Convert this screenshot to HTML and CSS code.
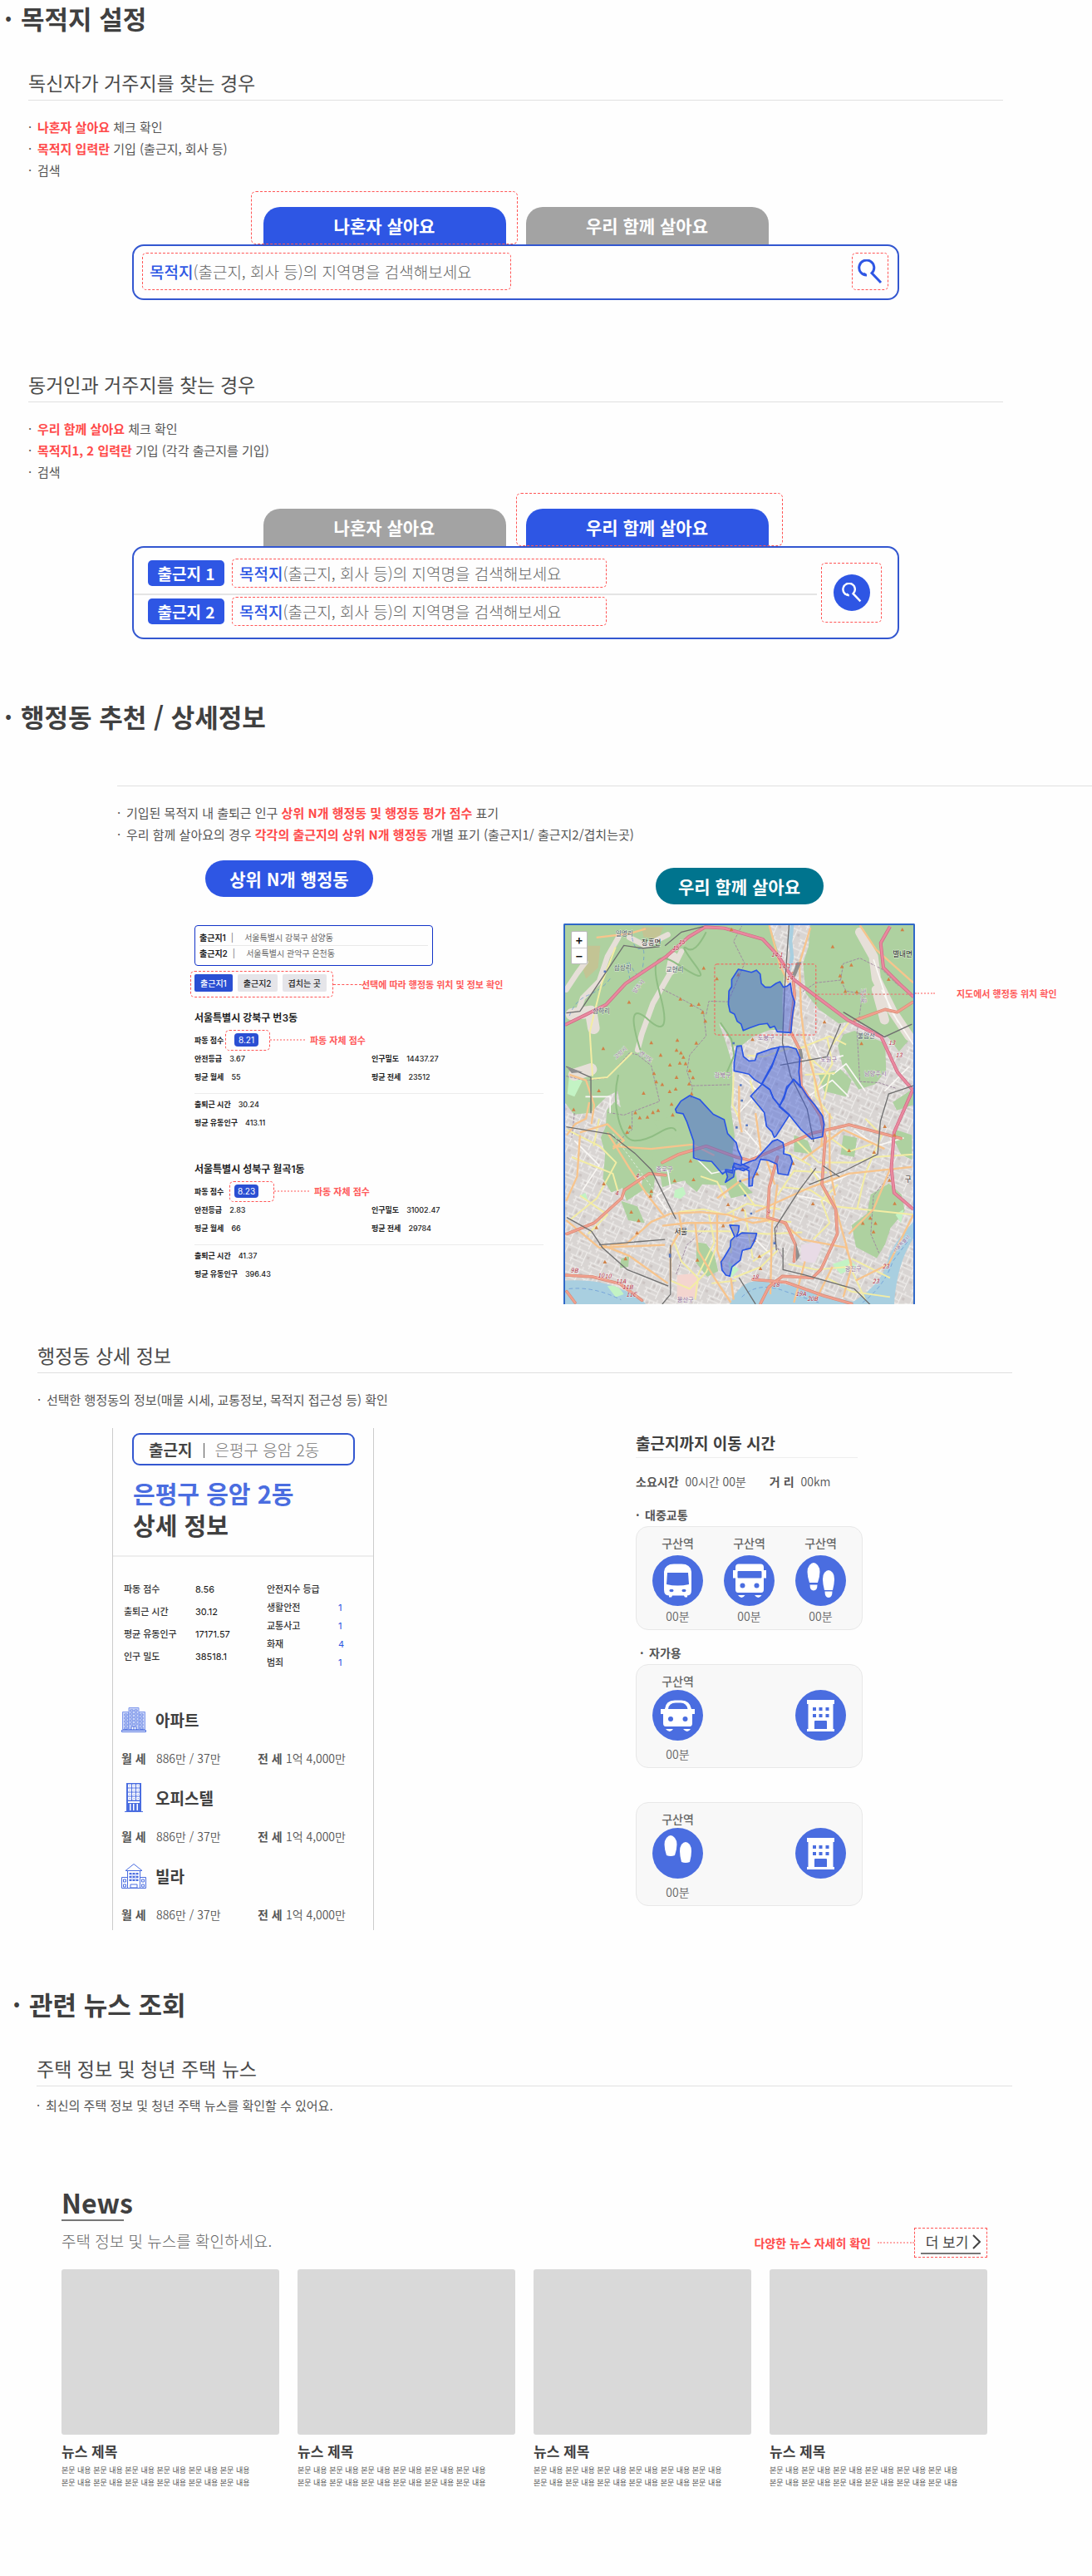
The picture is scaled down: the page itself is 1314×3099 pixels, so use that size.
FILE: index.html
```html
<!DOCTYPE html>
<html lang="ko">
<head>
<meta charset="utf-8">
<meta name="viewport" content="width=device-width, initial-scale=1">
<title>서비스 이용 안내</title>
<link rel="stylesheet" href="styles.css">
</head>
<body>
<svg class="sprite" aria-hidden="true">
  <symbol id="i-search" viewBox="0 0 30 30"><path d="M11 19A9 9 0 1 1 17 16.500L28 28M7 17l2.500 1.500" fill="none" stroke="currentColor" stroke-width="3"/></symbol>
  <symbol id="i-train" viewBox="0 0 61 61"><circle cx="30.500" cy="30.500" r="30.500" fill="#4a6de0"/><path d="M14 42V20q1-9.500 12-9.500h9q11 0 12 9.500v22q0 6.500-5 6.500v2h-3l-1-2H24l-1 2h-3v-2q-6 0-6-7z" fill="#fff"/><path d="M18 21h25l1 14q-13.500 3-27 0z" fill="#4a6de0"/><ellipse cx="23" cy="42.500" rx="2.600" ry="1.800" fill="#4a6de0"/><ellipse cx="38" cy="42.500" rx="2.600" ry="1.800" fill="#4a6de0"/></symbol>
  <symbol id="i-bus" viewBox="0 0 61 61"><circle cx="30.500" cy="30.500" r="30.500" fill="#4a6de0"/><path d="M18 10.500h26q4 0 4 4V18h3v9.500h-3V41q0 4-3 4H17q-3 0-3-4V27.500h-3V18h3v-3.500q0-4 4-4z" fill="#fff"/><rect x="16.500" y="19" width="29" height="8.500" rx="1" fill="#4a6de0"/><circle cx="22.500" cy="36.500" r="3" fill="#4a6de0"/><circle cx="39.500" cy="36.500" r="3" fill="#4a6de0"/><path d="M17 48h8.500q-4 6-8.500 0zM37 48h8.500q-4 6-8.500 0z" fill="#fff"/></symbol>
  <symbol id="i-walk" viewBox="0 0 61 61"><circle cx="30.500" cy="30.500" r="30.500" fill="#4a6de0"/><path d="M17 33q-5-15 0-21 5-6 10 0 5 6 0 21zM35 42q-4-16 0-21 5-6 10 0 4 5 0 21z" fill="#fff"/><path d="M17.500 35.500h9q0 7-4.500 7t-4.500-7zM35.500 43.500h9q0 7.500-4.500 7.500t-4.500-7.500z" fill="#fff"/></symbol>
  <symbol id="i-steps" viewBox="0 0 61 61"><circle cx="30.500" cy="30.500" r="30.500" fill="#4a6de0"/><path d="M17 33q-5-15 0-21 5-6 10 0 5 6 0 21-5 2-10 0zM35 41q-4-15 0-21 5-6 10 0 4 6 0 21-5 2-10 0z" fill="#fff"/></symbol>
  <symbol id="i-car" viewBox="0 0 61 61"><circle cx="30.500" cy="30.500" r="30.500" fill="#4a6de0"/><path d="M15 23q1-10.500 12-10.500h8q10 0 12 10.500h4v6h-3v11q0 4-3 4H16q-3 0-3-4V29h-3v-6z" fill="#fff"/><path d="M19 23q1-7.500 9-7.500h6q7 0 8.500 7.500z" fill="#4a6de0"/><circle cx="22" cy="35" r="3" fill="#4a6de0"/><circle cx="39.500" cy="35" r="3" fill="#4a6de0"/><path d="M16 47h9q-4 6-9 0zM37 47h9q-4 6-9 0z" fill="#fff"/></symbol>
  <symbol id="i-office" viewBox="0 0 61 61"><circle cx="30.500" cy="30.500" r="30.500" fill="#4a6de0"/><path d="M14 12h33v5h-1.500v30H47v3H14v-3h1.500V17H14z" fill="#fff"/><path d="M21 21h4v4h-4zM28.500 21h4v4h-4zM36.500 21h4v4h-4zM21 29h4v4h-4zM28.500 29h4v4h-4zM36.500 29h4v4h-4zM23 38q0-1 1-1h13q1 0 1 1v9H23z" fill="#4a6de0"/></symbol>
</svg>

<main>
<section class="guide guide-search">
  <h1>목적지 설정</h1>
  <article class="case">
    <h2>독신자가 거주지를 찾는 경우</h2>
    <ul class="notes">
      <li><em>나혼자 살아요</em> 체크 확인</li>
      <li><em>목적지 입력란</em> 기입 (출근지, 회사 등)</li>
      <li>검색</li>
    </ul>
    <form class="finder">
      <div class="tabs">
        <button type="button" class="tab is-active">나혼자 살아요</button>
        <button type="button" class="tab">우리 함께 살아요</button>
      </div>
      <div class="box box-single">
        <div class="field framed">
          <label for="place">목적지</label><input id="place" type="text" placeholder="(출근지, 회사 등)의 지역명을 검색해보세요">
        </div>
        <button type="button" class="go framed" aria-label="검색"><svg><use href="#i-search"/></svg></button>
      </div>
    </form>
  </article>
  <article class="case">
    <h2>동거인과 거주지를 찾는 경우</h2>
    <ul class="notes">
      <li><em>우리 함께 살아요</em> 체크 확인</li>
      <li><em>목적지1, 2 입력란</em> 기입 (각각 출근지를 기입)</li>
      <li>검색</li>
    </ul>
    <form class="finder">
      <div class="tabs">
        <button type="button" class="tab">나혼자 살아요</button>
        <button type="button" class="tab is-active">우리 함께 살아요</button>
      </div>
      <div class="box box-double">
        <div class="rows">
          <div class="row">
            <span class="chip">출근지 1</span>
            <div class="field framed">
              <label for="place1">목적지</label><input id="place1" type="text" placeholder="(출근지, 회사 등)의 지역명을 검색해보세요">
            </div>
          </div>
          <div class="row">
            <span class="chip">출근지 2</span>
            <div class="field framed">
              <label for="place2">목적지</label><input id="place2" type="text" placeholder="(출근지, 회사 등)의 지역명을 검색해보세요">
            </div>
          </div>
        </div>
        <button type="button" class="go go-round framed" aria-label="검색"><span><svg><use href="#i-search"/></svg></span></button>
      </div>
    </form>
  </article>
</section>

<section class="guide guide-area">
  <h1>행정동 추천 / 상세정보</h1>
  <div class="intro">
    <ul class="notes">
      <li>기입된 목적지 내 출퇴근 인구 <em>상위 N개 행정동 및 행정동 평가 점수</em> 표기</li>
      <li>우리 함께 살아요의 경우 <em>각각의 출근지의 상위 N개 행정동</em> 개별 표기 (출근지1/ 출근지2/겹치는곳)</li>
    </ul>
  </div>
  <div class="result">
    <div class="ranking">
      <p class="pill">상위 N개 행정동</p>
      <dl class="origins">
        <div><dt>출근지1</dt><dd>서울특별시 강북구 삼양동</dd></div>
        <div><dt>출근지2</dt><dd>서울특별시 관악구 은천동</dd></div>
      </dl>
      <div class="switch">
        <div class="switch-buttons framed">
          <button type="button" class="is-active">출근지1</button>
          <button type="button">출근지2</button>
          <button type="button">겹치는 곳</button>
        </div>
        <i class="leader leader-switch"></i>
        <strong class="remark">선택에 따라 행정동 위치 및 정보 확인</strong>
      </div>
      <article class="dong">
        <h3>서울특별시 강북구 번3동</h3>
        <div class="score">
          <span class="score-label">파동 점수</span><span class="score-frame framed"><b>8.21</b></span>
          <i class="leader leader-soft"></i><strong class="remark">파동 자체 점수</strong>
        </div>
        <dl class="stats">
          <div><dt>안전등급</dt><dd>3.67</dd></div><div><dt>인구밀도</dt><dd>14437.27</dd></div>
          <div><dt>평균 월세</dt><dd>55</dd></div><div><dt>평균 전세</dt><dd>23512</dd></div>
        </dl>
        <dl class="stats stats-sub">
          <div><dt>출퇴근 시간</dt><dd>30.24</dd></div>
          <div><dt>평균 유동인구</dt><dd>413.11</dd></div>
        </dl>
      </article>
      <article class="dong">
        <h3>서울특별시 성북구 월곡1동</h3>
        <div class="score">
          <span class="score-label">파동 점수</span><span class="score-frame score-frame-tight framed"><b>8.23</b></span>
          <i class="leader leader-soft"></i><strong class="remark">파동 자체 점수</strong>
        </div>
        <dl class="stats">
          <div><dt>안전등급</dt><dd>2.83</dd></div><div><dt>인구밀도</dt><dd>31002.47</dd></div>
          <div><dt>평균 월세</dt><dd>66</dd></div><div><dt>평균 전세</dt><dd>29784</dd></div>
        </dl>
        <dl class="stats stats-sub">
          <div><dt>출퇴근 시간</dt><dd>41.37</dd></div>
          <div><dt>평균 유동인구</dt><dd>396.43</dd></div>
        </dl>
      </article>
    </div>
    <div class="map-column">
      <p class="pill pill-teal">우리 함께 살아요</p>
      <div class="map">
        <svg viewBox="6 15 1269 1380" role="img" aria-label="행정동 지도">
          <defs>
            <pattern id="streets" width="74" height="66" patternUnits="userSpaceOnUse" patternTransform="rotate(24)">
              <rect width="74" height="66" fill="#d9d5d3"/>
              <path d="M0 12H74M0 40H50M20 0V40M52 12V66M8 40V66M36 12V40M0 54H52M62 0V12" stroke="#f3f1ef" stroke-width="3" fill="none"/>
              <path d="M26 20h8v12h-8zM58 24h10v10h-10zM14 46h12v5h-12z" fill="#cbc4c2"/>
            </pattern>
            <path id="peak" d="M0-7L7 6H-7z" fill="#d08146"/>
          </defs>
          <rect x="6" y="15" width="1269" height="1380" fill="url(#streets)"/>

          <!-- woodland and parks -->
          <g fill="#aed1a0">
            <path d="M6 15H752l28 90 24 90-6 90 2 110-50 2-60 24-50 40-24-10-26-50-24-30 22 60 26 84 2 80-6 90 14 100-8 60 20 120-130-6-20 28-40-34-16-40-60 24-50-20-70 22-40 36-36 14-30-50 8-90-16-60 18-40 4-60 28-30 22 20-10-60-40 20-60 60-60 6-30-40-62-20z"/>
            <path d="M900 15h375v400l-52 60-40-52-120-58-60 8-70-50-50-60-10-110 20-60z"/>
            <path d="M1060 400l112 44 4 100-40 50-60 20-60-90-16-70 20-40zM930 560l20 60 80 20 20-60-40-40z"/>
            <path d="M1120 996l66-40 46 40 12 60-52 62-20 60-30 50-76-40-16-80 56-42zM1210 760l60 20v90l-40-20-24-50zM1200 660l75-50v60l-60 20z"/>
            <path d="M484 1170l36 6 30 40 14 60-40 20-40-50zM380 870l70-20 40 20 20 40-40 30-50 10-60 20-10-60zM290 850l34 4 10 80-10 70-40-30 8-70zM180 870l70-40 40 40-30 50 30 60-60 40-20-60-50-20zM210 1020l60 20 26 60-60-10zM210 1230l30-10-4 40-30 4zM1020 780l50 10-10 70-50-10zM590 960l60-10 40 40-80 20zM840 780l50 20 20 50-70-10zM330 730l70-20 50 60-80 30z"/>
          </g>
          <g fill="#c3f3c4"><path d="M406 980l30-12 10 26-20 18-24-6zM980 1250l60-20 30 30-60 26zM1210 1070l30-20-10 50zM60 1000l20-10 10 30zM20 570l50 10-30 60-26-10zM600 1240l40 30-30 30z"/></g>
          <path d="M866 1180l60-14 16 20-26 60-50-6z" fill="#e8dbe6"/>
          <path d="M414 1290l60-6 20 30-10 60h-70z" fill="#f4d5cf"/>
          <path d="M66 90h68l-8 80-44 40-20-60zM284 22h80l-18 44-54-8z" fill="#c3c494"/>

          <!-- villages inside the woodland -->
          <g fill="none" stroke="#e6dfd8" stroke-linecap="round" stroke-linejoin="round">
            <path d="M200 60l-40 70-30 90-60 60-20 60M240 60l60 30 80-40M10 250l40-60 30-40M430 110l-30 60-40 70-34 60-40 110-16 60" stroke-width="20"/>
            <path d="M400 130l-10 50M1080 40l50 90 10 80 60 120 60 90M1140 250l30 110" stroke-width="34"/>
            <path d="M30 340l70-10 10 60M100 540l-60 20" stroke-width="44"/>
          </g>

          <!-- rivers -->
          <g fill="#a9cfe0">
            <path d="M6 1310q120-6 190 26 80 26 104 60H6z"/>
            <path d="M606 1396q40-90 110-84 120 10 250 54l130 30z"/>
            <path d="M1040 1396q110-60 140-150 10-60 95-150v60q-60 90-70 240z"/>
            <path d="M826 15h14l-6 60 6 60-14 50-8-2 8-60-6-50z"/>
          </g>
          <path d="M160 1330q40-10 60 30l-30 10z" fill="#c3f3c4"/>
          <g fill="none" stroke="#5c8fd6" stroke-width="2" stroke-dasharray="14 10"><path d="M20 1340q90-10 190 40M650 1370q60-60 160-20l120 40M1090 1390q80-60 110-150l60-80"/><path d="M250 60q10 50 30 40t10 60-40 10-8 40M170 210q-30 40-80 60t-70 80"/></g>

          <!-- administrative borders -->
          <g fill="none" stroke="#a08aa0" stroke-width="3" stroke-dasharray="10 4">
            <path d="M10 565l70 16 80-10 80-90 30 6 50 40 30 130-130 50-60-10M360 248l60 30 90 50 10 90-60 70-10 60 20 60-6 40M520 340l10-48 70 2 60-140-40-80 30-56M860 265l60-40 90-10 20 40 60 10-20 140 10 180 70 4 60 20M1010 215l10-60 60-20 80 40 60 60M40 700l-10 90M470 600l140-4M780 1110l-10 60 30 60M1210 900l-80 100-10 140 30 70M250 700v60l-60 50M520 1120l-70 60-40 110"/>
          </g>
          <g fill="none" stroke="#8fbd83" stroke-width="6"><path d="M520 40q-40 80-70 60t30 60-60 0-70 100-40 100-30 110M200 560q-20 80 0 160t60 80 90-30 60-5M572 370l40 60 10 60-26 60"/></g>

          <!-- minor roads -->
          <g fill="none" stroke="#faf8f5" stroke-width="5" stroke-linejoin="round">
            <path d="M640 560l70 60-80 90M900 420l40 90 80-20M890 640l90-60 60 60M1130 140l60 180 85 130M1160 250l60 120M340 900l40 10 10 60-50 30 40 60M480 860l60 60 90-20M1060 760l80 60 100-30M80 640h90v60M900 900l60 60 90-40M850 1000l110 20M620 1150l80 10 60 60M980 560l50-40 70 100M1170 620l90-90M40 800l90 90-60 90M660 760l60 70-40 60"/>
          </g>
          <g fill="none" stroke="#f3eda4" stroke-width="6" stroke-linejoin="round">
            <path d="M190 95l-50 130-30 120-14 60 10 160M100 575l60-6 90-90M870 410l40 120 10 110 60 80M870 460l100-40 60 30M900 500l70 60-20 90M960 420l20 100-60 100M880 560l110-6M1040 370l-60 80M670 490l60 4 90-30 60-4M620 550l-4 120 30 60M680 580l30 100M12 760l120 60 60 60-70 130-100 80M30 860l150 60 20 70M60 1000l100 70-70 70M130 720l-20 100M420 1060l90-10 80 20 80-40 120 20M430 1130h170l140 10 130-6M530 1070l20 100-60 120M620 1060l-10 150M660 1050l30 180M750 1040v60M780 1000l60-90 120 6M800 970l100 10 90 60 285 30M900 900l40 60 30 70M930 880h130l70-20 145-10M1000 960l-60 60 30 80-60 60M1100 720l60 60-60 140-30 130M960 780l80 60 90-30M560 1180l-40 100-60 60-70-30M400 1160l30 80 60 60-10 80M620 1300l100-40 60-60M690 1240l80-50M820 1250l100 20 120-10M960 1300l90 50 140 20M1050 1230l140 70M1040 1250l60 130M540 1320l90-10M720 1090l110 6M500 930l60 20 30 60M640 960l60 80M810 840l90 50M850 800l80 80"/>
          </g>
          <g fill="none" stroke="#f7c48c" stroke-width="7" stroke-linejoin="round">
            <path d="M120 60l120-14 60-18M1080 15l60 90 135 120M900 24l-40 130 6 180 14 110 36 130 30 130-6 120M750 15l40 150 30 60M970 700v200l20 100M102 740l10-70-30-90-60-20M60 770l100-30 60 60-40 30M60 780l-10 150-40 90M160 770l80 130 60 90 70 90M180 820l140 10 90-10 60-6 80 40M12 780l30-40 40-20 12-60M170 1180l60-4 90-80 70-30 110-6 100 10 90 30 60-10M360 1110l90-10h150l90-20 80 10M420 1060l10 60-40 70v120M480 1100l10 100 60 100 60 90M560 1070v130l20 60M560 1010l80-60 60-20M780 960l-20 150-6 250M800 1100l70 60 160 30 20 60M700 1060l200-90 140-50 230-24M1200 880l-70 170-90 90M870 870l150-110 150 70M1275 1070l-90 180-120 60M980 1000l50 180 20 80-30 110M920 1380l60-120M880 1240l-40 150M140 1180l100 40 140 100M10 1090l120 100 240-10M640 600v120l10 50M700 700l20 140M610 1300l10 80M740 870l30 90"/>
          </g>
          <g fill="none" stroke="#d98a75" stroke-width="11" stroke-linejoin="round" stroke-linecap="round">
            <path id="trunk" d="M836 190l6 80-16 130 36 70 4 130 70 110 18 80-12 170 50 90 6 90-60 130-30 30-110-6-50 40-30 60M360 880l60-30 100-30 110 40 50 12 230-100 130-30 190 50M12 1140l100-40 100-90 10-30 90-60 60 6M780 860l-30 110-6 110 66 20 36 80-6 60M1062 362l110-40 44 10 56-36M6 1290l100 6 100 26 80 60M690 1306l120 10 140 50 100 28M12 1350l30 40"/>
          </g>
          <g fill="none" stroke="#f0a08e" stroke-width="7" stroke-linejoin="round" stroke-linecap="round"><use href="#trunk" stroke="#f0a08e" stroke-width="7"/></g>
          <g fill="none" stroke="#cf6783" stroke-width="12" stroke-linejoin="round">
            <path id="motor" d="M6 378l70-34 80-40 70-76 150-100 80-70 60-36 70 4 140 40 56 60 56 86 200 150 120 60 60 130 57 66M1190 20l-34 60 10 90 60 60 50 46M1275 610l-70 160-10 130 10 90 70 60"/>
          </g>
          <g fill="none" stroke="#e9899f" stroke-width="8" stroke-linejoin="round"><use href="#motor"/></g>

          <!-- railways -->
          <g fill="none" stroke="#6e6e6e" stroke-width="4">
            <path d="M370 90l60-50 80-20M10 335l50-6 100-150 60-90 70 10 60-6M822 15l-16 230-8 200 30 120 60 120 24 120M790 525l170-30 50-120M1275 600l-90 30-30 100-10 120-120 60-130 50M946 892l60 40M1020 332l150 90 100-46M10 530l90 40v130M10 750l160 26 90 70 60 60 90 180M12 1080l90 50 40 60 90 80 150 60M130 1180l240-20M390 1180v180l-30 36M920 900l-60 80-90 140 6 80M800 1190v80l80 20 180 50 60 60M640 1300l60 96"/>
            <path d="M850 150h18l-24 54-10-8zM856 466h12l6 36h-10zM10 530l60 20-40 4zM846 1170l16 50-14 20z" fill="#8f8f8f" stroke="none"/>
            <path d="M180 776l230 314" stroke="#fff" stroke-width="2" stroke-dasharray="8 8"/>
          </g>
          <g fill="#5577c0"><path d="M147 180h8v8h-8zM616 441h8v8h-8zM642 594h8v8h-8zM646 650h8v8h-8zM627 748h8v8h-8zM664 740h8v8h-8zM640 944h8v8h-8zM658 996h8v8h-8zM680 1062h8v8h-8zM384 1212h8v14h-8zM765 1170h8v8h-8z"/></g>

          <g>
            <use href="#peak" x="511" y="171"/><use href="#peak" x="559" y="210"/><use href="#peak" x="426" y="284"/><use href="#peak" x="466" y="306"/><use href="#peak" x="493" y="303"/><use href="#peak" x="507" y="332"/><use href="#peak" x="517" y="364"/><use href="#peak" x="239" y="295"/><use href="#peak" x="320" y="443"/><use href="#peak" x="415" y="434"/><use href="#peak" x="484" y="444"/><use href="#peak" x="412" y="470"/><use href="#peak" x="428" y="480"/><use href="#peak" x="354" y="488"/><use href="#peak" x="437" y="496"/><use href="#peak" x="388" y="524"/><use href="#peak" x="424" y="517"/><use href="#peak" x="445" y="519"/><use href="#peak" x="460" y="545"/><use href="#peak" x="330" y="555"/><use href="#peak" x="412" y="569"/><use href="#peak" x="338" y="585"/><use href="#peak" x="360" y="595"/><use href="#peak" x="472" y="570"/><use href="#peak" x="458" y="593"/><use href="#peak" x="409" y="612"/><use href="#peak" x="387" y="621"/><use href="#peak" x="467" y="629"/><use href="#peak" x="292" y="627"/><use href="#peak" x="394" y="667"/><use href="#peak" x="345" y="690"/><use href="#peak" x="326" y="697"/><use href="#peak" x="262" y="698"/><use href="#peak" x="129" y="618"/><use href="#peak" x="145" y="464"/><use href="#peak" x="37" y="687"/><use href="#peak" x="242" y="750"/><use href="#peak" x="278" y="716"/><use href="#peak" x="306" y="714"/><use href="#peak" x="398" y="706"/><use href="#peak" x="232" y="769"/><use href="#peak" x="612" y="30"/><use href="#peak" x="689" y="431"/><use href="#peak" x="637" y="195"/><use href="#peak" x="981" y="93"/><use href="#peak" x="1015" y="166"/><use href="#peak" x="1049" y="160"/><use href="#peak" x="1008" y="199"/><use href="#peak" x="1017" y="222"/><use href="#peak" x="1027" y="256"/><use href="#peak" x="1069" y="258"/><use href="#peak" x="1185" y="212"/><use href="#peak" x="1235" y="31"/><use href="#peak" x="951" y="367"/><use href="#peak" x="1086" y="446"/><use href="#peak" x="1041" y="836"/><use href="#peak" x="1132" y="842"/><use href="#peak" x="1171" y="748"/><use href="#peak" x="1206" y="780"/><use href="#peak" x="463" y="874"/><use href="#peak" x="474" y="942"/><use href="#peak" x="405" y="946"/><use href="#peak" x="320" y="984"/><use href="#peak" x="317" y="1002"/><use href="#peak" x="147" y="957"/><use href="#peak" x="247" y="1060"/><use href="#peak" x="274" y="1091"/><use href="#peak" x="268" y="1136"/><use href="#peak" x="120" y="1117"/><use href="#peak" x="226" y="1230"/><use href="#peak" x="151" y="1242"/><use href="#peak" x="488" y="1235"/><use href="#peak" x="600" y="1033"/><use href="#peak" x="653" y="1052"/><use href="#peak" x="582" y="1110"/><use href="#peak" x="705" y="921"/><use href="#peak" x="837" y="883"/><use href="#peak" x="909" y="1030"/><use href="#peak" x="1188" y="944"/><use href="#peak" x="1207" y="1029"/><use href="#peak" x="1118" y="1082"/><use href="#peak" x="1091" y="1101"/><use href="#peak" x="1137" y="1101"/><use href="#peak" x="1130" y="1132"/><use href="#peak" x="714" y="1221"/><use href="#peak" x="718" y="1266"/><use href="#peak" x="695" y="1162"/>
          </g>

          <!-- selected districts -->
          <g fill="#3a58dc" fill-opacity=".45" stroke="#2a55e4" stroke-width="5" stroke-linejoin="round">
            <path d="M637 176l24 5 24 6 18-8 14 14 4 34 14 14h20l20-14 14-6 12 20 14-4 12-10 6 40 10 30-6 30-4 30-4 50-50-4-10-20-16 6-10-16-30 4-34 12-24 10-8-24-14-10-10-26-16-8-6-28 2-48 10-16v-26z"/>
            <path d="M632 456l16-2 8 40 20 16 22-2 8-24 50-18 30-6-24 60-40 74-26-16-20-20-26-6-28-6v-30z"/>
            <path d="M786 458h34l28 8 14 34-4 50 6 56-24-28-8 10-18 16-10 34-16 36-24-30-12-30-28-20 36-64z"/>
            <path d="M724 594l28 20 12 30 24 30 36 32-50 78-6 4-8-20-20-20-8-50-46-56-4-4z"/>
            <path d="M838 576l30 30 22 34 26 30 28 40 6 30-6 46-40 8-40-36-40-50-38-32 18-30 10-34z"/>
            <path d="M460 636l36 14 50 54 40 20 12 50 32 34 6 26 14 30-2 20 28 14-20 12-28-10-10-6-2 24-24-6-12 10-40-46-40-4-26-10v-60l-24-70-14-30-24-4-4-12 20-30z"/>
            <path d="M590 906l26 2 6-26 24 8 34-14 20-6 62-68 18-6 20 12 4 20-2 20 24 6 8 22-16 50-36-6-4-34-30-14-30-4-10 30-18 40-2 26-12 2v-56l-24-10-28 6-4 26-30 20 8-20z"/>
            <path d="M606 1108l34 2-2 20-8 20 20-14 54 2-6 24-16 30-30 8-8 36-30 24-8 34-14-4-14-18-4-30 10-14 24-40 2-24 14-14z"/>
          </g>

          <g class="map-label" font-size="23" fill="#4b5563">
            <text x="190" y="54">일영리</text><text x="184" y="179">삼상리</text><text x="374" y="184">교현리</text><text x="106" y="336">삼하리</text><text x="1072" y="427">불암산</text>
          </g>
          <g class="map-label" font-size="26" fill="#222"><text x="284" y="88">장흥면</text><text x="1200" y="130">별내면</text><text x="404" y="1142">서울</text><text x="1244" y="951">구</text></g>
          <g class="map-label" font-size="22" fill="#94709c"><text x="708" y="433">도봉구</text><text x="550" y="569">강북구</text><text x="936" y="513">노원구</text><text x="1096" y="563">남양주시</text><text x="338" y="910">종로구</text><text x="1026" y="1275">광진구</text><text x="414" y="1388">용산구</text></g>
          <g class="map-label" font-size="20" fill="#94709c"><text transform="translate(262 264) rotate(-52)">양주시</text><text transform="translate(192 504) rotate(-42)">고양시</text><text transform="translate(274 484) rotate(36)">경기도</text><text transform="translate(1102 300) rotate(-90)">경기도</text><text font-size="17" transform="translate(1208 1208) rotate(-45)">서울특별시</text></g>
          <g class="map-label map-route" font-size="22" fill="#b3283a"><text x="396" y="107">15</text><text x="418" y="84">15</text><text x="756" y="130">14.1</text><text x="784" y="172">14.1</text><text x="812" y="214">14</text><text x="1184" y="450">13</text><text x="1210" y="496">13</text><text x="262" y="936">4</text><text x="188" y="1000">4</text><text x="740" y="1069">9</text><text x="26" y="1282">9B</text><text x="124" y="1298">10</text><text x="150" y="1302">10</text><text x="190" y="1320">11A</text><text x="214" y="1342">11B</text><text x="228" y="1368">11C</text><text x="686" y="1304">18</text><text x="762" y="1332">18</text><text x="846" y="1366">19A</text><text x="888" y="1383">20B</text><text x="1126" y="1320">23</text><text x="1162" y="1266">23</text></g>
          <rect x="551" y="157" width="369" height="258" rx="8" fill="none" stroke="#ff5555" stroke-width="3" stroke-dasharray="9 6"/>
          <path d="M926 267H1275" stroke="#e57f7a" stroke-width="4" stroke-dasharray="8 6"/>
        </svg>
        <div class="zoom"><button type="button" aria-label="확대">+</button><button type="button" aria-label="축소">−</button></div>
      </div>
    </div>
    <div class="map-note"><i class="leader leader-soft"></i><strong class="remark">지도에서 행정동 위치 확인</strong></div>
  </div>
</section>

<section class="guide guide-detail">
  <h2>행정동 상세 정보</h2>
  <ul class="notes"><li>선택한 행정동의 정보(매물 시세, 교통정보, 목적지 접근성 등) 확인</li></ul>
  <div class="detail">
    <div class="panel">
      <p class="workplace"><b>출근지</b><span>은평구 응암 2동</span></p>
      <h3><span>은평구 응암 2동</span>상세 정보</h3>
      <div class="facts">
        <dl class="facts-main">
          <div><dt>파동 점수</dt><dd>8.56</dd></div>
          <div><dt>출퇴근 시간</dt><dd>30.12</dd></div>
          <div><dt>평균 유동인구</dt><dd>17171.57</dd></div>
          <div><dt>인구 밀도</dt><dd>38518.1</dd></div>
        </dl>
        <dl class="facts-safety">
          <div><dt class="wide">안전지수 등급</dt></div>
          <div><dt>생활안전</dt><dd>1</dd></div>
          <div><dt>교통사고</dt><dd>1</dd></div>
          <div><dt>화재</dt><dd>4</dd></div>
          <div><dt>범죄</dt><dd>1</dd></div>
        </dl>
      </div>
      <div class="home">
        <h4><svg viewBox="0 0 30 30"><path d="M1.500 5.500h7v21h-7zM21.500 5.500h7v21h-7z" fill="#c9d4f8" stroke="#7f98ec"/><path d="M9 .500h12v26H9z" fill="#c9d4f8" stroke="#7f98ec"/><path d="M11 3h3v2h-3zM16 3h3v2h-3zM11 7h3v2h-3zM16 7h3v2h-3zM11 11h3v2h-3zM16 11h3v2h-3zM11 15h3v2h-3zM16 15h3v2h-3zM11 19h3v2h-3zM16 19h3v2h-3zM4 8h3v2H4zM4 12h3v2H4zM4 16h3v2H4zM4 20h3v2H4zM4 24h3v2H4zM23 8h3v2h-3zM23 12h3v2h-3zM23 16h3v2h-3zM23 20h3v2h-3zM23 24h3v2h-3z" fill="#fff" stroke="#4a6de0" stroke-width=".8"/><path d="M12 23h6v4h-6zM15 23v4M.500 27.500h29v2H.500z" fill="#fff" stroke="#4a6de0"/></svg>아파트</h4>
        <p><b>월 세</b><span>886만 / 37만</span><b>전 세</b><span>1억 4,000만</span></p>
      </div>
      <div class="home">
        <h4><svg viewBox="0 0 30 36"><path d="M6 0h18v34H6z" fill="#4a6de0"/><path d="M8 1.500h4v4H8zM13 1.500h4v4h-4zM18 1.500h4v4h-4zM8 6.500h4v4H8zM13 6.500h4v4h-4zM18 6.500h4v4h-4zM8 11.500h4v4H8zM13 11.500h4v4h-4zM18 11.500h4v4h-4zM8 16.500h4v4H8zM13 16.500h4v4h-4zM18 16.500h4v4h-4zM8 22h14v2H8zM10 25h1.500v8H10zM14 25h1.500v8H14zM18.500 25H20v8h-1.500z" fill="#fff"/><path d="M9.500 3.500h1.500M14.500 3.500H16M19.500 3.500H21M9.500 8.500h1.500M14.500 8.500H16M19.500 8.500H21M9.500 13.500h1.500M14.500 13.500H16M19.500 13.500H21M9.500 18.500h1.500M14.500 18.500H16M19.500 18.500H21" stroke="#8ea5ee"/><path d="M4 34.500h22" stroke="#4a6de0"/></svg>오피스텔</h4>
        <p><b>월 세</b><span>886만 / 37만</span><b>전 세</b><span>1억 4,000만</span></p>
      </div>
      <div class="home">
        <h4><svg viewBox="0 0 30 30"><path d="M.500 16.500h7v13h-7zM22.500 16.500h7v13h-7zM7.500 8.500h15v21h-15zM5 8.500L15 .500l10 8z" fill="#fff" stroke="#4a6de0"/><path d="M2.500 19h3v3h-3zM2.500 25h3v3h-3zM24.500 19h3v3h-3zM24.500 25h3v3h-3zM11 25h8v4h-8z" fill="#fff" stroke="#4a6de0"/><path d="M9.500 12h11M9.500 16h11M9.500 20h11" stroke="#4a6de0" stroke-width="2" stroke-dasharray="3 1"/><path d="M9.500 14h11M9.500 18h11" stroke="#a4b6f2"/></svg>빌라</h4>
        <p><b>월 세</b><span>886만 / 37만</span><b>전 세</b><span>1억 4,000만</span></p>
      </div>
    </div>
    <div class="travel">
      <h3>출근지까지 이동 시간</h3>
      <p class="summary"><b>소요시간</b><span>00시간 00분</span><b>거 리</b><span>00km</span></p>
      <h4>대중교통</h4>
      <div class="card">
        <div class="stop"><b>구산역</b><svg><use href="#i-train"/></svg><span>00분</span></div>
        <div class="stop"><b>구산역</b><svg><use href="#i-bus"/></svg><span>00분</span></div>
        <div class="stop"><b>구산역</b><svg><use href="#i-walk"/></svg><span>00분</span></div>
      </div>
      <h4 class="inset">자가용</h4>
      <div class="card card-direct">
        <div class="stop"><b>구산역</b><svg><use href="#i-car"/></svg><span>00분</span></div>
        <svg class="goal"><use href="#i-office"/></svg>
      </div>
      <div class="card card-direct card-apart">
        <div class="stop"><b>구산역</b><svg><use href="#i-steps"/></svg><span>00분</span></div>
        <svg class="goal"><use href="#i-office"/></svg>
      </div>
    </div>
  </div>
</section>

<section class="guide guide-news">
  <h1>관련 뉴스 조회</h1>
  <h2>주택 정보 및 청년 주택 뉴스</h2>
  <ul class="notes"><li>최신의 주택 정보 및 청년 주택 뉴스를 확인할 수 있어요.</li></ul>
  <div class="news">
    <h3>News</h3>
    <div class="news-bar">
      <p>주택 정보 및 뉴스를 확인하세요.</p>
      <strong>다양한 뉴스 자세히 확인</strong>
      <i class="leader leader-soft"></i>
      <a class="more framed" href="#news"><span>더 보기<svg viewBox="0 0 10 18"><path d="M1 1l8 8-8 8" fill="none" stroke="#444" stroke-width="2"/></svg></span></a>
    </div>
    <div class="news-grid" id="news">
      <article><div class="thumb"></div><h4>뉴스 제목</h4><p>본문 내용 본문 내용 본문 내용 본문 내용 본문 내용 본문 내용<br>본문 내용 본문 내용 본문 내용 본문 내용 본문 내용 본문 내용</p></article>
      <article><div class="thumb"></div><h4>뉴스 제목</h4><p>본문 내용 본문 내용 본문 내용 본문 내용 본문 내용 본문 내용<br>본문 내용 본문 내용 본문 내용 본문 내용 본문 내용 본문 내용</p></article>
      <article><div class="thumb"></div><h4>뉴스 제목</h4><p>본문 내용 본문 내용 본문 내용 본문 내용 본문 내용 본문 내용<br>본문 내용 본문 내용 본문 내용 본문 내용 본문 내용 본문 내용</p></article>
      <article><div class="thumb"></div><h4>뉴스 제목</h4><p>본문 내용 본문 내용 본문 내용 본문 내용 본문 내용 본문 내용<br>본문 내용 본문 내용 본문 내용 본문 내용 본문 내용 본문 내용</p></article>
    </div>
  </div>
</section>
</main>
</body>
</html>
```
FILE: styles.css
```css
:root {
  --blue: #2e56e4;
  --line-blue: #3357d0;
  --soft-blue: #4a6de0;
  --red: #ff4a4a;
  --ink: #404040;
  --text: #555;
}

* { box-sizing: border-box; }

body, h1, h2, h3, h4, p, ul, dl, dd { margin: 0; }

body {
  background: #fefefe;
  color: var(--text);
  font-family: "Noto Sans CJK KR", sans-serif;
  font-size: 15px;
}

ul { padding: 0; list-style: none; }
button, input { font: inherit; border: 0; padding: 0; margin: 0; background: none; color: inherit; }
button { cursor: pointer; }
svg { display: block; }
i, em { font-style: normal; }
.sprite { position: absolute; width: 0; height: 0; }

/* shared pieces */
h1 {
  display: flex;
  padding: 0 0 2px 5px;
  color: var(--ink);
  font-size: 31px;
  line-height: 44px;
  font-weight: 700;
}
h1::before { content: "·"; width: 20px; }

h2 {
  padding-bottom: 2px;
  color: #4a4a4a;
  font-size: 23px;
  line-height: 38px;
  font-weight: 400;
  border-bottom: 1px solid #e0e0e0;
}

.notes { margin-top: 19px; padding-bottom: 1px; line-height: 26px; }
.notes li { display: flex; white-space: pre; }
.notes li::before { content: "·"; width: 11px; }
.notes em { color: var(--red); font-weight: 700; }

.framed { border: 1px dashed #ff5555; border-radius: 5px; }

.leader { flex: none; height: 0; border-top: 1px dashed #ff5555; }
.leader-soft { border-top: 2px dotted #ffaaaa; }

.remark { color: #ff5a5a; font-size: 11px; line-height: 20px; font-weight: 700; white-space: nowrap; }

/* destination search */
.case { margin: 34px 107px 0 34px; }
.case + .case { margin-top: 82px; }

.finder { max-width: 923px; margin: 30px auto 0; }

.tabs { display: flex; justify-content: center; gap: 24px; }
.tab {
  position: relative;
  width: 292px;
  height: 45px;
  padding-bottom: 2px;
  border-radius: 20px 20px 0 0;
  background: #a3a3a3;
  color: #fff;
  font-size: 21px;
  font-weight: 700;
}
.tab.is-active { background: var(--blue); }
.tab.is-active::before {
  content: "";
  position: absolute;
  inset: -19px -14px 0 -15px;
  border: 1px dashed #ff5555;
  border-radius: 6px;
}
.tab.is-active:last-child::before { inset: -19px -17px 0 -12px; }

.box { display: flex; border: 2px solid var(--line-blue); border-radius: 14px; }
.box-single { justify-content: space-between; padding: 8px 11px 10px 10px; }

.field {
  display: flex;
  align-items: center;
  flex: 0 1 444px;
  height: 45px;
  padding-left: 8px;
  font-size: 19px;
}
.field label { color: var(--blue); font-weight: 500; }
.field input { flex: 1; min-width: 0; height: 100%; font-weight: 300; }
.field input::placeholder { color: #666; opacity: 1; }

.go { display: flex; align-items: center; justify-content: center; width: 44px; color: var(--blue); }
.go svg { width: 30px; height: 30px; }

.box-double { align-items: center; padding-bottom: 14px; }
.rows { flex: 0 1 822px; }
.row { display: flex; align-items: center; gap: 9px; padding: 13px 0 7px 17px; }
.row + .row { border-top: 2px solid #e4e4e4; padding: 2px 0 0 17px; }
.row .field { flex-basis: 451px; height: 35px; }
.chip {
  width: 92px;
  border-radius: 5px;
  background: var(--blue);
  color: #fff;
  font-size: 19px;
  line-height: 31px;
  font-weight: 700;
  text-align: center;
}
.go-round { width: 73px; height: 72px; margin: 14px 0 0 5px; color: #fff; }
.go-round span {
  display: flex;
  align-items: center;
  justify-content: center;
  width: 44px;
  height: 44px;
  border-radius: 50%;
  background: var(--blue);
}
.go-round svg { width: 24px; height: 24px; }

/* recommended districts */
.guide-area { margin-top: 71px; }
.intro { margin: 59px 0 0 141px; border-top: 1px solid #e0e0e0; }

.result {
  display: grid;
  grid-template-columns: 449fr 423fr 213fr;
  margin: 17px 0 0 229px;
}
.pill {
  width: 202px;
  border-radius: 22px;
  background: var(--blue);
  color: #fff;
  font-size: 21px;
  line-height: 44px;
  font-weight: 700;
  text-align: center;
}
.pill-teal { margin: 9px auto 23px; background: #00748e; }

.ranking {
  padding: 0 24px 0 5px;
  color: #222;
  font-family: Inter, "Noto Sans CJK KR", sans-serif;
}
.ranking .pill, .ranking .remark { font-family: "Noto Sans CJK KR", sans-serif; }
.ranking .pill { margin-left: 13px; }

.origins {
  width: 287px;
  height: 49px;
  margin-top: 34px;
  padding: 5px;
  border: 1px solid #1233c8;
  border-radius: 4px;
  font-size: 10px;
  line-height: 18px;
}
.origins div { display: flex; }
.origins div + div { border-top: 1px solid #e8e8e8; }
.origins dt { font-weight: 600; }
.origins dt::after { content: "|"; margin-left: 6px; color: #777; font-weight: 400; }
.origins dd { margin-left: 13px; color: #666; }

.switch { display: flex; align-items: center; margin: 6px 0 0 -5px; }
.switch-buttons { display: flex; gap: 6px; height: 32px; padding: 3px 7px 6px 4px; }
.switch-buttons button {
  height: 21px;
  padding: 0 7px;
  border-radius: 2px;
  background: #e5e5e9;
  font-size: 10px;
  font-weight: 500;
}
.switch-buttons .is-active { background: #2b4fd3; color: #fff; }
.leader-switch { width: 34px; }

.dong { margin-top: 15px; }
.dong + .dong { margin-top: 35px; }
.dong h3 { font-size: 12px; line-height: 20px; font-weight: 600; }
.score { display: flex; align-items: center; height: 24px; margin-top: 4px; }
.score-label { width: 37px; font-size: 9px; font-weight: 600; }
.score-frame { display: flex; align-items: center; width: 54px; height: 25px; padding-left: 10px; }
.score-frame-tight { margin-left: 5px; padding-left: 5px; }
.score-frame b {
  width: 29px;
  border-radius: 4px;
  background: #2b4fd3;
  color: #fff;
  font-size: 10px;
  line-height: 16px;
  font-weight: 400;
  text-align: center;
}
.score .leader { width: 42px; margin-right: 6px; }

.stats { display: grid; grid-template-columns: 213fr 207fr; font-size: 9px; line-height: 22px; }
.stats div { display: flex; gap: 9px; }
.stats dt { font-weight: 600; }
.stats dd { font-weight: 500; }
.stats-sub { grid-template-columns: 1fr; margin-top: 8px; padding-top: 2px; border-top: 1px solid #ececec; }

.map { position: relative; border: 2px solid #2f68c8; border-bottom: 0; border-radius: 2px 2px 0 0; }
.map svg { width: 100%; height: auto; }
.map-label { font-family: "Noto Sans CJK KR", sans-serif; stroke: #fff; stroke-opacity: 0.6; stroke-width: 3px; paint-order: stroke; }
.map-route { font-style: italic; }
.zoom {
  position: absolute;
  top: 7px;
  left: 7px;
  width: 20px;
  border: 1px solid #bbb;
  border-radius: 2px;
  background: #fff;
}
.zoom button { display: block; width: 100%; height: 19px; color: #111; font-size: 14px; line-height: 18px; font-weight: 700; }
.zoom button + button { border-top: 1px solid #ccc; }

.map-note { display: flex; align-items: center; height: 20px; margin-top: 150px; }
.map-note .leader { width: 24px; margin-right: 26px; }

/* district detail */
.guide-detail { padding: 0 96px 0 45px; margin-top: 42px; }
.detail {
  display: grid;
  grid-template-columns: minmax(0, 315px) minmax(0, 273px);
  column-gap: 315px;
  margin: 20px 0 0 90px;
}
.panel { padding: 6px 0 7px; border: solid #ccc; border-width: 0 1px; }
.workplace {
  display: flex;
  align-items: center;
  height: 39px;
  margin: 0 22px 0 23px;
  padding-left: 18px;
  border: 2px solid var(--line-blue);
  border-radius: 9px;
  font-size: 19px;
}
.workplace b { color: #444; }
.workplace span { color: #777; font-weight: 300; }
.workplace span::before {
  content: "";
  display: inline-block;
  width: 1px;
  height: 18px;
  margin: 0 12px 0 14px;
  background: #555;
  vertical-align: -2px;
}
.panel h3 {
  padding: 14px 0 18px 24px;
  border-bottom: 2px solid #eee;
  color: var(--ink);
  font-size: 29px;
  line-height: 38px;
}
.panel h3 span { display: block; color: var(--soft-blue); }

.facts {
  display: grid;
  grid-template-columns: 172px 1fr;
  margin-top: 26px;
  padding-left: 13px;
  font-family: Inter, "Noto Sans CJK KR", sans-serif;
  font-size: 11px;
  line-height: 27px;
}
.facts div { display: grid; grid-template-columns: 86px 1fr; }
.facts .wide { grid-column: span 2; }
.facts dt { color: #333; font-weight: 500; }
.facts dd { color: #111; }
.facts-safety { margin-top: 2px; line-height: 22px; }
.facts-safety dd { color: #2b55e0; }

.home { margin: 18px 0 0 10px; }
.facts + .home { margin-top: 40px; }
.home h4 {
  display: flex;
  align-items: center;
  gap: 11px;
  height: 36px;
  color: var(--ink);
  font-size: 19px;
}
.home svg { width: 30px; max-height: 36px; }
.home p {
  display: grid;
  grid-template-columns: 42px 122px 34px 1fr;
  margin-top: 16px;
  font-size: 14px;
  line-height: 24px;
}
.home span, .summary span { font-weight: 350; }

.travel { padding-top: 1px; }
.travel h3 {
  margin-right: 6px;
  border-bottom: 1px solid #eee;
  color: var(--ink);
  font-size: 19px;
  line-height: 34px;
}
.summary { display: flex; margin-top: 16px; font-size: 14px; line-height: 24px; white-space: nowrap; }
.summary span { margin: 0 28px 0 8px; }
.travel h4 { display: flex; margin-top: 14px; font-size: 14px; line-height: 28px; }
.travel h4::before { content: "·"; width: 11px; }
.travel .inset { margin-top: 13px; padding-left: 5px; }

.card {
  display: flex;
  justify-content: space-between;
  height: 125px;
  padding: 9px 19px 0;
  border: 1px solid #e8e8e8;
  border-radius: 15px;
  background: #f8f8f8;
}
.card-apart { margin-top: 41px; }
.stop { width: 61px; color: #666; font-size: 14px; line-height: 20px; text-align: center; }
.stop b, .stop span { display: block; }
.stop b { font-weight: 500; }
.stop span { font-weight: 350; }
.stop svg, .goal { width: 61px; height: 61px; }
.stop svg { margin: 5px 0 2px; }
.card-direct .stop svg { margin: 1px 0 6px; }
.goal { margin-top: 21px; }

/* news */
.guide-news { padding: 0 96px 104px 44px; margin-top: 67px; }
.guide-news h1 { margin-left: -34px; }
.guide-news h2 { margin-top: 34px; }
.guide-news .notes { margin-top: 10px; }
.news { margin: 82px 30px 0; }
.news h3 { color: var(--ink); font-size: 32px; line-height: 41px; }
.news h3::after { content: ""; display: block; width: 75px; height: 2px; background: #777; }
.news-bar { display: flex; align-items: center; height: 36px; margin-top: 8px; }
.news-bar p { margin-right: auto; padding-bottom: 4px; color: #666; font-size: 19px; line-height: 28px; font-weight: 300; }
.news-bar strong { color: var(--red); font-size: 14px; }
.news-bar .leader { width: 44px; margin-left: 8px; }
.more { display: flex; justify-content: center; align-items: center; width: 88px; height: 36px; border-radius: 0; color: #444; text-decoration: none; }
.more span { display: flex; align-items: center; gap: 5px; padding: 0 0 0 6px; border-bottom: 2px solid #777; font-size: 17px; line-height: 26px; }
.more svg { width: 10px; height: 18px; }

.news-grid { display: grid; grid-template-columns: repeat(4, 1fr); gap: 22px; margin-top: 14px; }
.thumb { height: 199px; border-radius: 3px; background: #d9d9d9; }
.news-grid h4 { margin-top: 7px; color: var(--ink); font-size: 17px; line-height: 26px; }
.news-grid p { margin-top: 2px; font-size: 9px; line-height: 15px; }
```
